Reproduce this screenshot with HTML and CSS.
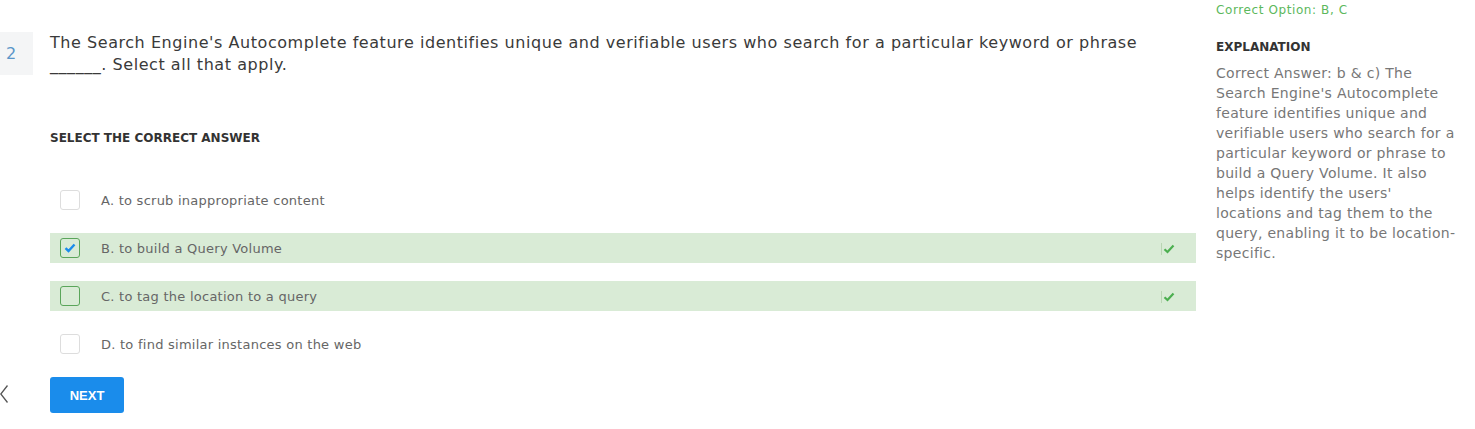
FILE: index.html
```html
<!DOCTYPE html>
<html>
<head>
<meta charset="utf-8">
<link rel="stylesheet" href="styles.css">
</head>
<body>
<div class="page">
  <div class="main">
    <div class="qrow">
      <div class="qnum">2</div>
      <div class="qbody">
        <p class="qtext">The Search Engine's Autocomplete feature identifies unique and verifiable users who search for a particular keyword or phrase ______. Select all that apply.</p>
        <h4 class="label">SELECT THE CORRECT ANSWER</h4>
        <ul class="options">
          <li class="opt"><span class="box"></span><span class="otext">A. to scrub inappropriate content</span></li>
          <li class="opt correct"><span class="box green checked"><svg width="12" height="10" viewBox="0 0 12 10"><path d="M1.5 5.2 L4.5 8 L10.5 1.5" fill="none" stroke="#1a8ceb" stroke-width="2.4"/></svg></span><span class="otext">B. to build a Query Volume</span><span class="mark"><svg width="12" height="10" viewBox="0 0 12 10"><path d="M1.5 5.2 L4.5 8 L10.5 1.5" fill="none" stroke="#4caf50" stroke-width="2.2"/></svg></span></li>
          <li class="opt correct"><span class="box green"></span><span class="otext">C. to tag the location to a query</span><span class="mark"><svg width="12" height="10" viewBox="0 0 12 10"><path d="M1.5 5.2 L4.5 8 L10.5 1.5" fill="none" stroke="#4caf50" stroke-width="2.2"/></svg></span></li>
          <li class="opt"><span class="box"></span><span class="otext">D. to find similar instances on the web</span></li>
        </ul>
        <div class="nav">
          <span class="prev"><svg width="8" height="18" viewBox="0 0 8 18"><path d="M7.5 0.5 L0.8 9 L7.5 17.5" fill="none" stroke="#555" stroke-width="1.3"/></svg></span>
          <button class="next">NEXT</button>
        </div>
      </div>
    </div>
  </div>
  <aside class="side">
    <div class="answer">Correct Option: B, C</div>
    <h4 class="exp-title">EXPLANATION</h4>
    <p class="exp">Correct Answer: b &amp; c) The Search Engine's Autocomplete feature identifies unique and verifiable users who search for a particular keyword or phrase to build a Query Volume. It also helps identify the users' locations and tag them to the query, enabling it to be location-specific.</p>
  </aside>
</div>
</body>
</html>
```
FILE: styles.css
```css
* { box-sizing: border-box; }
body {
  margin: 0;
  background: #fff;
  font-family: "DejaVu Sans", "Open Sans", sans-serif;
  color: #333;
}
.page {
  display: flex;
  width: 1475px;
  height: 429px;
}
.main {
  width: 1196px;
  flex: none;
}
.qrow {
  display: flex;
  padding-top: 32px;
}
.qnum {
  width: 33px;
  height: 43px;
  background: #f4f5f6;
  color: #5b95c9;
  font-size: 16px;
  padding-left: 6px;
  line-height: 43px;
  flex: none;
  margin-right: 17px;
}
.qbody {
  flex: 1;
  position: relative;
}
.qtext {
  margin: 0;
  font-size: 16px;
  letter-spacing: 0.55px;
  line-height: 22px;
  color: #3a3a3a;
  width: 1100px;
}
.label {
  margin: 54px 0 0;
  font-size: 12px;
  font-weight: 700;
  line-height: 16px;
  color: #333;
}
.options {
  list-style: none;
  margin: 39px 0 0;
  padding: 0;
  display: flex;
  flex-direction: column;
  gap: 18px;
}
.opt {
  height: 30px;
  display: flex;
  align-items: center;
  padding-left: 10px;
  position: relative;
}
.opt.correct { background: #d9ebd6; }
.box {
  width: 20px;
  height: 20px;
  border: 1px solid #ddd;
  border-radius: 3px;
  background: #fff;
  display: flex;
  align-items: center;
  justify-content: center;
  flex: none;
}
.box.green {
  border-color: #5aa55a;
  background: transparent;
}
.otext {
  margin-left: 21px;
  font-size: 13px;
  letter-spacing: 0.25px;
  color: #666;
}
.mark {
  position: absolute;
  left: 1111px;
  top: 10px;
  display: flex;
  align-items: center;
  border-left: 1px solid #b9d5b3;
  height: 12px;
  padding-left: 1px;
}
.nav {
  margin-top: 18px;
  display: flex;
  align-items: center;
  position: relative;
}
.prev {
  position: absolute;
  left: -50px;
  top: 8px;
}
.next {
  width: 74px;
  height: 36px;
  border: none;
  border-radius: 3px;
  background: #1a8ceb;
  color: #fff;
  font-family: "Liberation Sans", Arial, sans-serif;
  font-weight: 700;
  font-size: 13px;
  padding: 0;
}
.side {
  margin-left: 20px;
  width: 245px;
  flex: none;
}
.answer {
  color: #5cb85c;
  font-size: 12px;
  letter-spacing: 0.6px;
  line-height: 18px;
  margin-top: 1px;
}
.exp-title {
  margin: 20px 0 0;
  font-size: 12px;
  font-weight: 700;
  line-height: 16px;
  color: #333;
}
.exp {
  margin: 8px 0 0;
  font-size: 14px;
  letter-spacing: 0.3px;
  line-height: 20px;
  color: #777;
}
```
